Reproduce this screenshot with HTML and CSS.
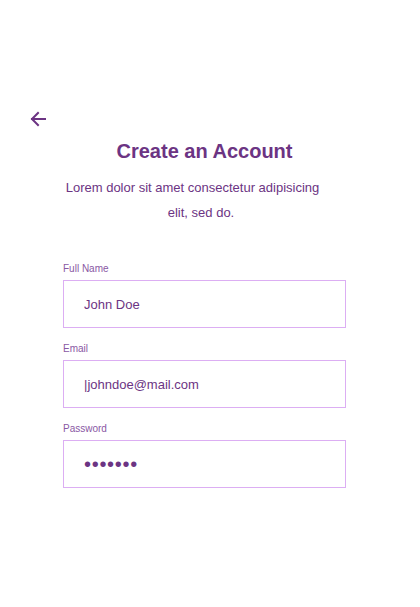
FILE: index.html
```html
<!DOCTYPE html>
<html lang="en">
<head>
<meta name="viewport" content="width=device-width, initial-scale=1">
<title>Create an Account</title>
<link rel="stylesheet" href="styles.css">
</head>
<body>
<div class="screen">
    <button type="button" class="back-button" aria-label="Back">
        <svg width="16" height="16" viewBox="0 0 16 16" fill="none" stroke="currentColor" stroke-width="2" stroke-linecap="square">
            <path d="M15 8H2"/>
            <path d="M8 2L2 8l6 6"/>
        </svg>
    </button>

    <div class="content">
        <h1 class="title">Create an Account</h1>
        <p class="subtitle">Lorem dolor sit amet consectetur adipisicing<br>elit, sed do.</p>

        <form id="signupForm" class="signup-form">
            <div class="field">
                <label for="full_name">Full Name</label>
                <input type="text" id="full_name" name="full_name" value="John Doe">
            </div>
            <div class="field">
                <label for="email">Email</label>
                <input type="text" id="email" name="email" value="|johndoe@mail.com">
            </div>
            <div class="field">
                <label for="password">Password</label>
                <input type="password" id="password" name="password" value="1234567">
            </div>
        </form>
    </div>
</div>
</body>
</html>
```

FILE: styles.css
```css
body {
    margin: 0;
    background-color: #fff;
    color: #6c3483;
    font-family: "Liberation Sans", Arial, sans-serif;
}
.screen {
    padding-top: 111px;
}
.back-button {
    display: block;
    margin-left: 30px;
    padding: 0;
    width: 16px;
    height: 16px;
    border: none;
    background: none;
    color: #6c3483;
    cursor: pointer;
}
.back-button svg {
    display: block;
}
.content {
    margin-left: 63px;
    width: 283px;
}
.title {
    margin: 12px 0 0;
    font-size: 20px;
    line-height: 24px;
    font-weight: bold;
    text-align: center;
}
.subtitle {
    width: 270px;
    margin: 12px 0 0 3px;
    font-size: 13px;
    line-height: 25px;
    text-align: center;
    text-indent: -17px;
}
.signup-form {
    margin-top: 38px;
}
.field {
    display: flex;
    flex-direction: column;
    gap: 5px;
    margin-bottom: 15px;
}
.field label {
    font-size: 10px;
    line-height: 12px;
    color: #8a58a4;
}
.field input {
    box-sizing: border-box;
    width: 100%;
    height: 48px;
    margin: 0;
    padding: 0 20px;
    border: 1px solid #dcaef3;
    border-radius: 0;
    background: #fff;
    color: #6c3483;
    font-family: inherit;
    font-size: 13px;
    outline: none;
}
.field input[type="password"] {
    font-size: 20px;
    letter-spacing: 0.7px;
}
```
